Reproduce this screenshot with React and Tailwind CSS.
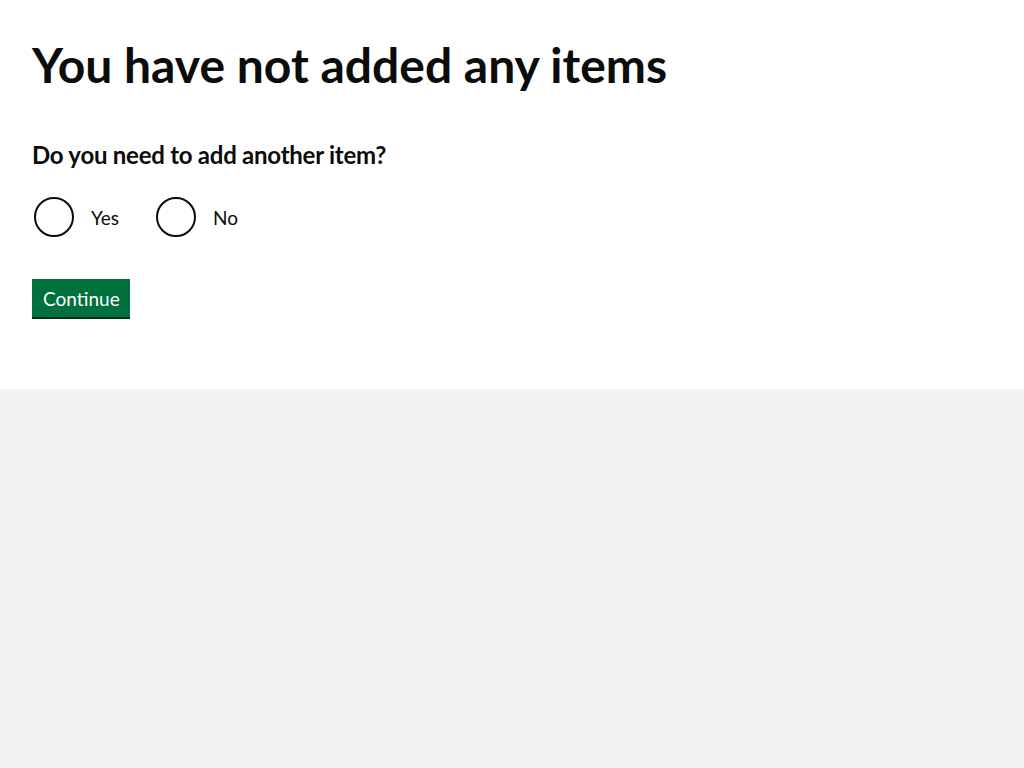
export default function App() {
  return (
    <div className="min-h-[768px] bg-[#f3f2f1] font-['Lato','Liberation_Sans',sans-serif] text-[#0b0c0c]">
      <main className="bg-white px-[32px] pt-[40px] pb-[40px]">
        <h1 className="text-[48px] font-bold leading-[50px] mb-[50px]">
          You have not added any items
        </h1>
        <form onSubmit={(e) => e.preventDefault()}>
          <fieldset className="mb-[30px]">
            <legend className="text-[24px] font-bold leading-[30px] mb-[27px] tracking-[-0.25px]">
              Do you need to add another item?
            </legend>
            <div className="flex mb-[12px]">
              {["Yes", "No"].map((opt) => (
                <label key={opt} className="flex items-center mr-[20px] cursor-pointer">
                  <span className="w-[40px] h-[40px] ml-[2px] rounded-full border-2 border-[#0b0c0c] bg-white" />
                  <span className="text-[19px] leading-[25px] pl-[17px] pr-[15px] py-[5px]">{opt}</span>
                </label>
              ))}
            </div>
          </fieldset>
          <button className="bg-[#00703c] text-white text-[19px] leading-[19px] pt-[10px] pb-[9px] pl-[11px] pr-[10px] shadow-[0_2px_0_#002d18] mb-[32px]">
            Continue
          </button>
        </form>
      </main>
    </div>
  );
}
